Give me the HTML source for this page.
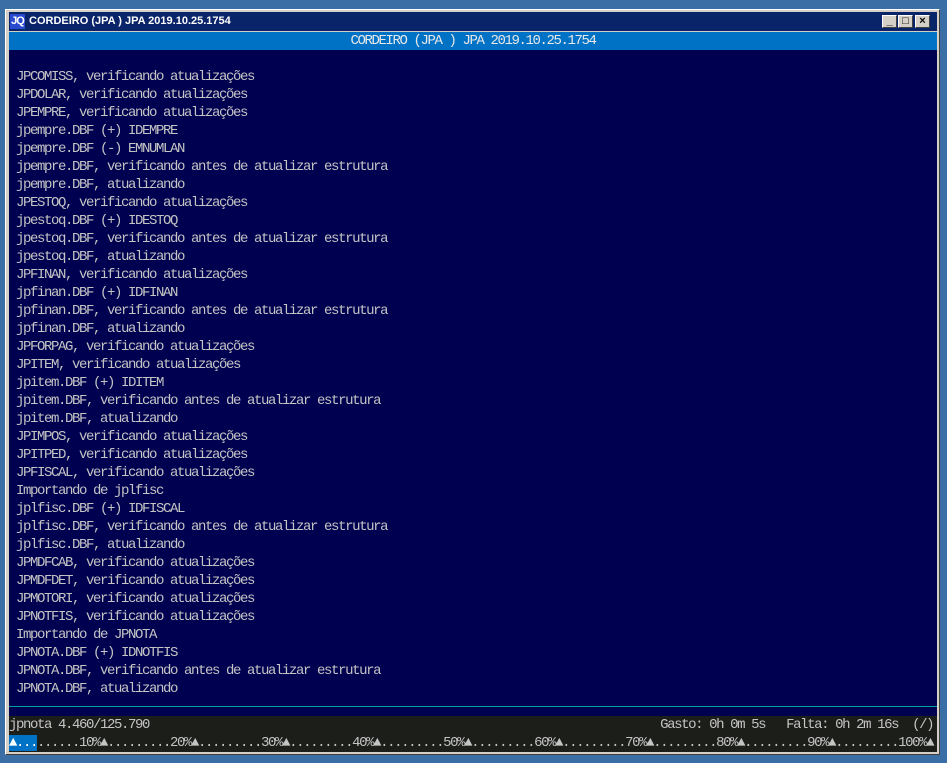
<!DOCTYPE html>
<html><head><meta charset="utf-8"><style>
body{margin:0;width:947px;height:763px;background:#3a6ea5;position:relative;overflow:hidden;font-family:"Liberation Mono",monospace}
.win{position:absolute;left:5px;top:9px;width:935px;height:746px;background:#d4d0c8;border-top:1px solid #fff;border-left:1px solid #fff;border-right:1px solid #404040;border-bottom:1px solid #404040;box-sizing:border-box}
.tb{position:absolute;left:9px;top:12px;width:928px;height:19px;background:#0a246a;color:#fff;font:bold 11px "Liberation Sans",sans-serif;line-height:19px}
.tb .ic{position:absolute;left:1px;top:2px;width:15px;height:15px;background:#2a4ad0;color:#fff;font:bold 11px "Liberation Sans";line-height:15px;text-align:center;letter-spacing:-1px}
.tb .t{position:absolute;left:20px}
.bt{position:absolute;top:3px;width:15px;height:13px;background:#d4d0c8;border-top:1px solid #fff;border-left:1px solid #fff;border-right:1px solid #404040;border-bottom:1px solid #404040;box-sizing:border-box;color:#000;font:bold 11px "Liberation Sans";line-height:11px;text-align:center}
.bar{position:absolute;left:9px;top:32px;width:928px;height:18px;background:#0072c6;color:#e8e8e8;font-size:14px;letter-spacing:-1.4px;line-height:18px;text-align:center}
.main{position:absolute;left:9px;top:50px;width:928px;height:666px;background:#000050}
.line{position:absolute;left:0;top:656px;width:928px;height:1px;background:#00a0a0}
pre{margin:0;position:absolute;left:7px;top:18px;color:#c4c4c4;font:14px/18px "Liberation Mono",monospace;letter-spacing:-1.4px}
.st{position:absolute;left:9px;top:716px;width:928px;height:36px;background:#1c1e1a;color:#c4c4c4;font-size:14px;letter-spacing:-1.4px;line-height:18px}
.st pre{left:0;top:0}
.hl{background:#0072c6;color:#fff}
</style></head><body>
<div class="win"></div>
<div class="tb"><div class="ic">JQ</div><span class="t">CORDEIRO (JPA ) JPA 2019.10.25.1754</span>
<div class="bt" style="left:873px">_</div><div class="bt" style="left:889px">□</div><div class="bt" style="left:906px">×</div></div>
<div class="bar">CORDEIRO (JPA ) JPA 2019.10.25.1754</div>
<div class="main"><pre>JPCOMISS, verificando atualizações
JPDOLAR, verificando atualizações
JPEMPRE, verificando atualizações
jpempre.DBF (+) IDEMPRE
jpempre.DBF (-) EMNUMLAN
jpempre.DBF, verificando antes de atualizar estrutura
jpempre.DBF, atualizando
JPESTOQ, verificando atualizações
jpestoq.DBF (+) IDESTOQ
jpestoq.DBF, verificando antes de atualizar estrutura
jpestoq.DBF, atualizando
JPFINAN, verificando atualizações
jpfinan.DBF (+) IDFINAN
jpfinan.DBF, verificando antes de atualizar estrutura
jpfinan.DBF, atualizando
JPFORPAG, verificando atualizações
JPITEM, verificando atualizações
jpitem.DBF (+) IDITEM
jpitem.DBF, verificando antes de atualizar estrutura
jpitem.DBF, atualizando
JPIMPOS, verificando atualizações
JPITPED, verificando atualizações
JPFISCAL, verificando atualizações
Importando de jplfisc
jplfisc.DBF (+) IDFISCAL
jplfisc.DBF, verificando antes de atualizar estrutura
jplfisc.DBF, atualizando
JPMDFCAB, verificando atualizações
JPMDFDET, verificando atualizações
JPMOTORI, verificando atualizações
JPNOTFIS, verificando atualizações
Importando de JPNOTA
JPNOTA.DBF (+) IDNOTFIS
JPNOTA.DBF, verificando antes de atualizar estrutura
JPNOTA.DBF, atualizando</pre><div class="line"></div></div>
<div class="st"><pre>jpnota 4.460/125.790                                                                         Gasto: 0h 0m 5s   Falta: 0h 2m 16s  (/)
<span class="hl">▲...</span>......10%▲.........20%▲.........30%▲.........40%▲.........50%▲.........60%▲.........70%▲.........80%▲.........90%▲.........100%▲</pre></div>
</body></html>
